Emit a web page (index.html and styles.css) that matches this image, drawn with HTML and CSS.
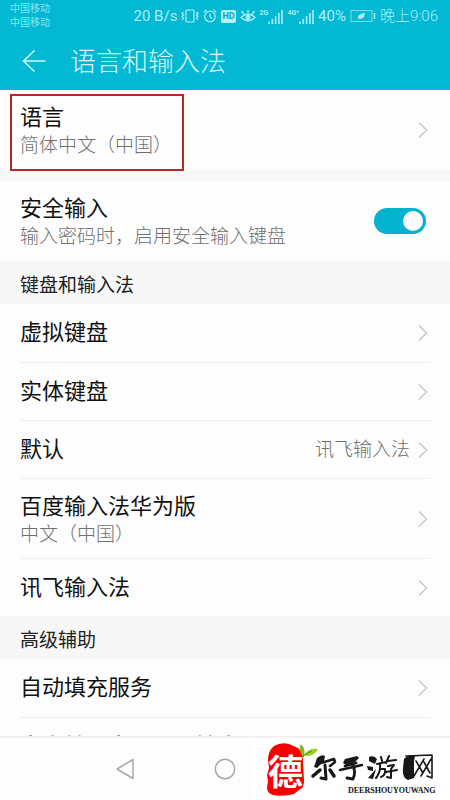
FILE: index.html
```html
<!DOCTYPE html>
<html lang="zh-CN">
<head>
<meta charset="utf-8">
<meta name="viewport" content="width=device-width, initial-scale=1">
<title>语言和输入法</title>
<link rel="stylesheet" href="styles.css">
</head>
<body>
<svg class="defs" aria-hidden="true">
  <symbol id="chevron" viewBox="0 0 10 18"><path d="M1 1.500 8.500 9 1 16.500" fill="none" stroke="currentColor" stroke-width="1.300"/></symbol>
  <symbol id="signal" viewBox="0 0 15 15"><path d="M1 12.500V15M4.300 10V15M7.600 7V15M10.900 4V15M14 1V15" fill="none" stroke="currentColor" stroke-width="1.600"/></symbol>
</svg>

<header class="top">
  <div class="status">
    <div class="carriers"><span>中国移动</span><span>中国移动</span></div>
    <div class="indicators">
      <span class="speed">20 B/s</span>
      <svg width="18" height="16" viewBox="0 0 18 16" fill="none" stroke="currentColor" stroke-width="1.200"><rect x="5" y="2" width="8" height="12" rx="1"/><path d="M2.500 4 1 5.500 2.500 7 1 8.500 2.500 10 1 12M15.500 4 17 5.500 15.500 7 17 8.500 15.500 10 17 12"/></svg>
      <svg width="14" height="16" viewBox="0 0 14 16" fill="none" stroke="currentColor" stroke-width="1.200"><circle cx="7" cy="8.500" r="5.300"/><path d="M7 5.500V9L9.300 10.500M.7 4.200 3.500 1.600M13.300 4.200 10.500 1.600"/></svg>
      <span class="hd">HD</span>
      <svg width="16" height="16" viewBox="0 0 16 16" fill="none" stroke="currentColor" stroke-width="1.300"><path d="M1 9.500Q8 3 15 9.500Q8 16 1 9.500Z"/><circle cx="8" cy="9.500" r="1.800" fill="currentColor"/><path d="M1.500 3 4 6.500M8 2V5.500M14.500 3 12 6.500"/></svg>
      <span class="cell"><small>2G</small><svg width="15" height="15"><use href="#signal"/></svg></span>
      <span class="cell"><small>4G⁺</small><svg width="15" height="15"><use href="#signal"/></svg></span>
      <span class="percent">40%</span>
      <svg width="26" height="14" viewBox="0 0 26 14" fill="none" stroke="currentColor"><rect x="1" y="1.500" width="21" height="11" opacity=".7"/><path d="M24.500 4V10" stroke-width="1.500"/><path d="M8 10Q6.500 5 15 4Q14.500 11 9 9.500Z" fill="currentColor" stroke="none"/></svg>
      <time class="clock">晚上9:06</time>
    </div>
  </div>
  <div class="titlebar">
    <button class="back" aria-label="返回"><svg width="24" height="24" viewBox="0 0 24 24" fill="none" stroke="currentColor" stroke-width="1.500"><path d="M12.500 1.500 1.500 12 12.500 22.500M1.500 12H23.500"/></svg></button>
    <h1>语言和输入法</h1>
  </div>
</header>

<main class="settings">
  <section class="group">
    <a class="row tall marked" href="#language"><span class="text"><span class="name">语言</span><span class="note">简体中文（中国）</span></span><svg class="chevron"><use href="#chevron"/></svg></a>
  </section>
  <section class="group spaced">
    <div class="row tall">
      <label class="text" for="secure"><span class="name">安全输入</span><span class="note">输入密码时，启用安全输入键盘</span></label>
      <input class="switch" id="secure" type="checkbox" checked>
    </div>
  </section>
  <h2>键盘和输入法</h2>
  <section class="group">
    <a class="row" href="#virtual"><span class="name">虚拟键盘</span><svg class="chevron"><use href="#chevron"/></svg></a>
    <a class="row" href="#physical"><span class="name">实体键盘</span><svg class="chevron"><use href="#chevron"/></svg></a>
    <a class="row" href="#default"><span class="name">默认</span><span class="note value">讯飞输入法</span><svg class="chevron"><use href="#chevron"/></svg></a>
    <a class="row tall" href="#baidu"><span class="text"><span class="name">百度输入法华为版</span><span class="note">中文（中国）</span></span><svg class="chevron"><use href="#chevron"/></svg></a>
    <a class="row" href="#xunfei"><span class="name">讯飞输入法</span><svg class="chevron"><use href="#chevron"/></svg></a>
  </section>
  <h2>高级辅助</h2>
  <section class="group">
    <a class="row" href="#autofill"><span class="name">自动填充服务</span><svg class="chevron"><use href="#chevron"/></svg></a>
    <a class="row" href="#tts"><span class="name">文字转语音 (TTS) 输出</span><svg class="chevron"><use href="#chevron"/></svg></a>
  </section>
</main>

<nav class="keys">
  <button aria-label="返回"><svg width="22" height="22" viewBox="0 0 22 22"><path d="M19 1.500V20.500L3 11Z" stroke-linejoin="round"/></svg></button>
  <button aria-label="主页"><svg width="22" height="22" viewBox="0 0 22 22"><circle cx="11" cy="11" r="9.700"/></svg></button>
  <button aria-label="最近任务"><svg width="22" height="22" viewBox="0 0 22 22"><rect x="2" y="2" width="18" height="18"/></svg></button>
</nav>

<aside class="brand">
  <svg viewBox="0 0 200 62" role="img" aria-label="德尔手游网">
    <path d="M24 8Q31 4 39 6L48 10Q53 14 53 23L54 43Q54 50 49 52L44 56Q33 59 23 57Q17 55 17 50L18 43 17 37 19 30 18 22Q18 13 24 8Z" fill="#f70000"/>
    <path d="M53 19Q48 12 51 6Q56 11 54 19Z" fill="#80b916"/>
    <path d="M54 18Q58 9 68 11Q64 19 54 18Z" fill="#9bd01b"/>
    <path d="M51 20Q55 15 62 13" fill="none" stroke="#4c9012"/>
    <text class="seal" x="18" y="47">德</text>
    <g class="ink">
      <path d="M67 20Q72 16 75 18L74 23 67 30 64 29Z"/>
      <path d="M71 25 84 21 85 24 80 28" stroke-width="2.500"/>
      <path d="M75 27 76 41 71 40" stroke-width="3"/>
      <path d="M70 32 63 38M80 32 84 38" stroke-width="3.500"/>
      <path d="M95 21 107 18 109 20 105 24 96 27 93 25Z"/>
      <path d="M90 32 112 27" stroke-width="2.500"/>
      <path d="M95 28 106 25M101 24Q107 32 103 41L97 40" stroke-width="2.800"/>
      <path d="M119 19Q124 17 127 21L125 26 119 23ZM117 28 123 29 123 33 118 32ZM118 40 126 31 123 41Z"/>
      <path d="M131 19 132 23M127 26 136 24M130 26Q131 34 126 40M130 31H135Q136 37 131 39M139 18 136 25M138 23 146 22M138 28 144 27 141 31V40L137 39M136 34 147 32" stroke-width="2"/>
      <path d="M154 21Q158 16 165 18L164 23V40L158 42Q152 40 153 30Z"/>
      <path d="M156 18 182 17V40L177 38M166 23 173 35M174 21 164 38M174 24 180 35M181 21 171 38" stroke-width="1.600"/>
    </g>
    <text class="latin" x="98" y="55">DEERSHOUYOUWANG</text>
  </svg>
</aside>
</body>
</html>
```
FILE: styles.css
```css
* { box-sizing: border-box; }

body {
  margin: 0;
  height: 100vh;
  display: flex;
  flex-direction: column;
  position: relative;
  overflow: hidden;
  background: #fdfdfd;
  color: #111;
  font-family: Roboto, "Noto Sans CJK SC", sans-serif;
}

.defs { display: none; }
svg { display: block; flex: none; }
button { padding: 0; border: 0; background: none; color: inherit; }
a { color: inherit; text-decoration: none; }

.top {
  flex: none;
  background: #03b8d2;
  color: #d8f8fc;
}

.status {
  height: 32px;
  padding: 0 12px 0 10px;
  display: flex;
  justify-content: space-between;
}

.carriers {
  display: flex;
  flex-direction: column;
  padding-top: 2px;
  font-size: 10px;
  line-height: 14px;
  color: #8ce2ee;
}

.indicators {
  display: flex;
  align-items: center;
  gap: 4px;
  color: #a9eef6;
  font-size: 15px;
  line-height: 20px;
}

.clock { font-weight: 300; }

.hd {
  padding: 0 1px;
  border-radius: 2px;
  background: #b5f2f8;
  color: #03a9c2;
  font-size: 9px;
  font-weight: 700;
  line-height: 13px;
}

.cell { display: flex; align-items: flex-start; }
.cell small { font-size: 7px; line-height: 8px; font-weight: 700; }

.titlebar {
  height: 58px;
  padding: 0 22px;
  display: flex;
  align-items: center;
  gap: 24px;
}

h1 {
  margin: 0;
  padding-top: 2px;
  font-size: 26px;
  line-height: 36px;
  font-weight: 300;
}

.settings {
  flex: 1;
  min-height: 0;
  overflow: hidden;
}

.spaced { border-top: 11px solid #f7f7f7; }

h2 {
  margin: 0;
  padding: 7px 20px 0;
  background: #f7f7f7;
  color: #222;
  font-size: 19px;
  font-weight: 400;
  line-height: 36px;
}

.row {
  position: relative;
  min-height: 58px;
  margin: 0 20px;
  display: flex;
  align-items: center;
  justify-content: space-between;
}

.row + .row { border-top: 1px solid #efefef; }
.tall { min-height: 80px; }
.text { display: flex; flex-direction: column; padding-top: 2px; }
.name { font-size: 22px; line-height: 30px; }
.note { font-size: 19px; line-height: 26px; color: #707070; font-weight: 300; }
.value { margin-left: auto; margin-right: 8px; }
.chevron { width: 10px; height: 18px; margin-right: 2px; color: #c4c4c4; }

.marked::after {
  content: "";
  position: absolute;
  left: -10px;
  top: 4px;
  width: 174px;
  height: 77px;
  box-sizing: border-box;
  border: 2px solid #b92722;
  pointer-events: none;
}

.switch {
  appearance: none;
  flex: none;
  margin: 0 4px 0 0;
  width: 52px;
  height: 26px;
  padding: 3px;
  border-radius: 13px;
  background: #03b3cd;
  display: flex;
  justify-content: flex-end;
}

.switch::before {
  content: "";
  width: 20px;
  height: 20px;
  border-radius: 50%;
  background: #fdfdfd;
}

.switch:not(:checked) { background: #bbb; justify-content: flex-start; }

.keys {
  flex: none;
  height: 64px;
  border-top: 2px solid #f0f0f0;
  display: flex;
  align-items: center;
  justify-content: center;
  gap: 78px;
}

.keys svg { fill: none; stroke: #a8a8a8; stroke-width: 1.5; }

.brand {
  position: absolute;
  right: 0;
  bottom: 0;
  width: 200px;
  background: #fff;
  color: #181818;
}

.ink { fill: currentColor; }

.ink path[stroke-width] {
  fill: none;
  stroke: currentColor;
  stroke-linecap: round;
  stroke-linejoin: round;
}

.seal {
  fill: #fff;
  font: 700 35px "Noto Sans CJK SC", sans-serif;
}

.latin {
  fill: #111;
  font: 700 8px "Liberation Serif", serif;
}
```
